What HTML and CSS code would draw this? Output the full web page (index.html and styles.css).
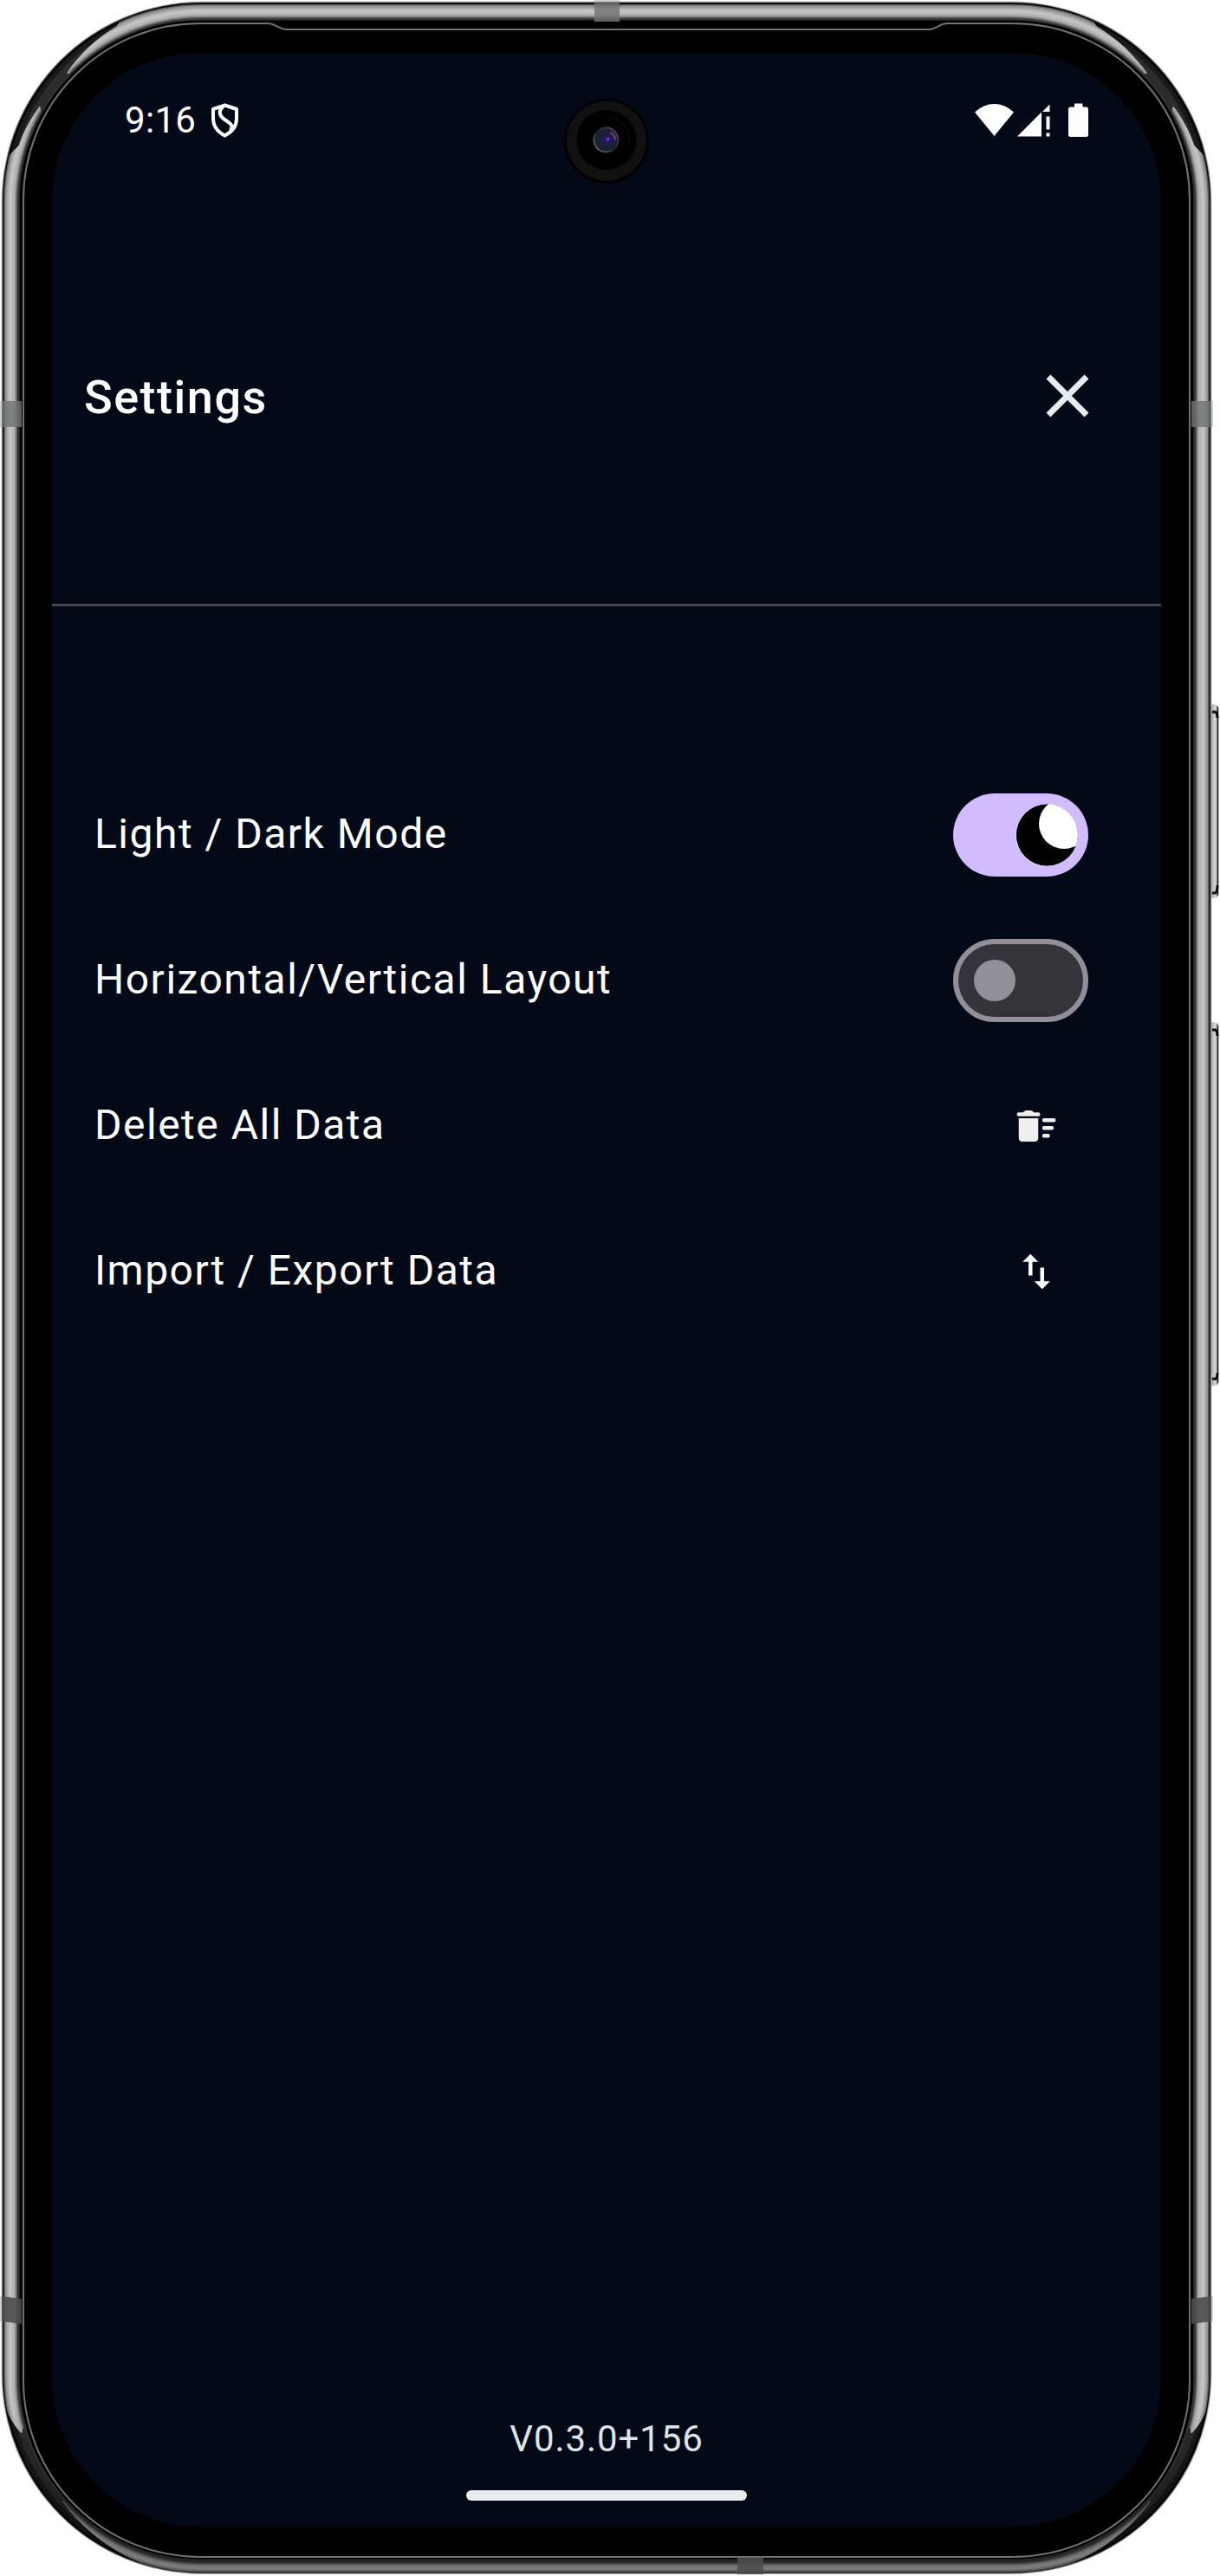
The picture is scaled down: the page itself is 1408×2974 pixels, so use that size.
FILE: index.html
```html
<!DOCTYPE html>
<html lang="en">
<head>
<meta charset="utf-8">
<title>Settings</title>
<link rel="stylesheet" href="styles.css">
</head>
<body>
<div class="phone">
  <svg class="phone-frame" viewBox="0 0 1408 2974" aria-hidden="true">
    <defs>
      <linearGradient id="button" x1="1397" x2="1407" y1="0" y2="0" gradientUnits="userSpaceOnUse">
        <stop offset="0" stop-color="#555"/><stop offset=".25" stop-color="#bbb"/><stop offset=".6" stop-color="#ddd"/><stop offset=".75" stop-color="#888"/><stop offset=".85" stop-color="#111"/><stop offset="1" stop-color="#bbb"/>
      </linearGradient>
      <linearGradient id="shade" x1="0" x2="0" y1="2780" y2="2900" gradientUnits="userSpaceOnUse">
        <stop offset="0" stop-color="#000" stop-opacity="0"/><stop offset="1" stop-color="#000" stop-opacity=".34"/>
      </linearGradient>
      <radialGradient id="lens" cx=".55" cy=".48" r=".5">
        <stop offset="0" stop-color="#4a28b0"/><stop offset=".25" stop-color="#28155a"/><stop offset=".6" stop-color="#1d1f38"/><stop offset="1" stop-color="#14242c"/>
      </radialGradient>
      <linearGradient id="lens-rim" x1="0" y1="1" x2="1" y2="0">
        <stop offset="0" stop-color="#777"/><stop offset=".5" stop-color="#222"/><stop offset="1" stop-color="#6b3f78"/>
      </linearGradient>
      <clipPath id="lit">
        <path d="M77 85C92 62 112 44 135 30L150 0H1250L1265 30C1288 44 1308 62 1324 85L1200 60H200Z"/>
        <path d="M46 123C36 136 28 150 22 168L0 190V2765C8 2785 15 2800 25 2809L40 2740L60 232Z"/>
        <path d="M1354 123C1364 136 1372 150 1378 168L1400 190V2765C1392 2785 1385 2800 1375 2809L1360 2740L1340 232Z"/>
        <path d="M72 2887C95 2920 130 2945 160 2958L165 2974H1235L1240 2958C1270 2945 1305 2920 1328 2887L1200 2920H200Z"/>
      </clipPath>
    </defs>

    <g class="side-button">
      <rect x="1394" y="813" width="12.5" height="224" rx="6"/>
      <rect x="1394" y="1180" width="12.5" height="420" rx="6"/>
      <path d="M1399 822H1403Q1405 824 1405 829M1399 1031H1403Q1405 1028 1405 1022M1399 1189H1403Q1405 1191 1405 1196M1399 1592H1403Q1405 1590 1405 1585"/>
    </g>

    <rect x="1.5" y="1.5" width="1397" height="2970.5" rx="231" fill="#bdbdbd"/>
    <rect x="2.5" y="2.5" width="1395" height="2968.5" rx="230" fill="#555"/>
    <rect x="3.2" y="3.2" width="1393.6" height="2967" rx="229" fill="#060606"/>
    <rect x="6" y="6" width="1388" height="2962" rx="226" fill="#1a1a1a"/>
    <rect x="11" y="11" width="1378" height="2952" rx="221" fill="#2c2c2c"/>
    <g clip-path="url(#lit)">
      <rect x="4.5" y="5" width="1391" height="2965" rx="227" fill="#626262"/>
      <rect x="6" y="6.5" width="1388" height="2962" rx="226" fill="#969696"/>
      <rect x="8" y="9" width="1384" height="2958" rx="224" fill="#aeaeae"/>
      <rect x="10" y="11" width="1380" height="2955" rx="222" fill="#c2c2c2"/>
      <rect x="14" y="15" width="1372" height="2950" rx="218" fill="#b4b4b4"/>
      <rect x="17" y="18" width="1366" height="2944" rx="215" fill="#8c8c8c"/>
      <rect x="19" y="20" width="1362" height="2940" rx="213" fill="#505050"/>
    </g>
    <rect x="20" y="21.5" width="1360" height="2936.5" rx="212" fill="#363636"/>
    <rect x="22.5" y="23.5" width="1355" height="2931" rx="208" fill="#000"/>
    <path class="shade" d="M3 2700H1397V2742A229 229 0 0 1 1168 2971H232A229 229 0 0 1 3 2742Z"/>
    <path class="seam" d="M231 27H309C317 27 322 33.5 331 34H1072C1081 33.5 1085 27 1093 27H1169A204 204 0 0 1 1373 231V2748A204 204 0 0 1 1169 2952H231A204 204 0 0 1 27 2748V231A204 204 0 0 1 231 27Z"/>

    <g class="antenna">
      <rect x="686" y="2" width="29" height="23"/>
      <rect x="2" y="463" width="23" height="30"/>
      <rect x="1375" y="463" width="23" height="30"/>
      <path class="antenna-edge" d="M686 0H715V2H686ZM0 463H2V493H0ZM1398 463H1400V493H1398ZM0 2651H2V2680H0ZM1398 2651H1400V2680H1398Z"/>
      <path class="antenna-dark" d="M2 2651L25 2654V2683L2 2680ZM1375 2654L1398 2651V2680L1375 2683ZM851 2953H881V2972H851Z"/>
    </g>
  </svg>

  <main class="screen">
    <div class="status-bar">
      <span class="clock">9:16</span>
      <svg class="shield" width="33" height="40" viewBox="0 0 33 40"><path d="M16.5 2.5L30 7V18C30 27 25.500 33 16.500 37.500C7.500 33 3 27 3 18V7ZM15 3.500C8.500 9 10 14.500 15.500 18.500C22 23 27 25 23 32"/></svg>
      <svg class="signals" width="132" height="40" viewBox="0 0 132 40">
        <path d="M1 10.500Q11 1 23.500 1T46 10.500L23.500 38Z"/>
        <path d="M87.500 1.500V10H79ZM50 38.500L78 10.500V38.500ZM83.500 15.500H87.500V30.500H83.500ZM83.500 34.500H87.500V38.500H83.500Z"/>
        <path d="M116 0.500H125.500V4.500H129.500Q132 4.500 132 7V36.500Q132 39 129.500 39H111.500Q109 39 109 36.500V7Q109 4.500 111.500 4.500H116Z"/>
      </svg>
      <svg class="camera" width="98" height="98" viewBox="0 0 98 98">
        <circle cx="49" cy="49" r="49" fill="#000"/>
        <circle cx="49" cy="48.500" r="46" fill="#111"/>
        <circle cx="49" cy="47.500" r="34.500" fill="#000"/>
        <path d="M52 21A27 27 0 0 1 75 53" fill="none" stroke="#0b0b0d" stroke-width="1.500"/>
        <circle cx="48.500" cy="47.500" r="14" fill="url(#lens)" stroke="url(#lens-rim)" stroke-width="2"/>
        <path d="M53 39Q59 41 59 48" fill="none" stroke="#8a4f96" stroke-width="2" opacity=".7"/>
        <circle cx="51" cy="46.500" r="1.300" fill="#7f50f0"/>
      </svg>
    </div>

    <header class="header">
      <h1 class="title">Settings</h1>
      <svg class="close" width="84" height="84" viewBox="0 0 24 24"><path d="M19 6.410L17.590 5 12 10.590 6.410 5 5 6.410 10.590 12 5 17.590 6.410 19 12 13.410 17.590 19 19 17.590 13.410 12z"/></svg>
    </header>

    <section class="options">
      <div class="option">
        <span class="label">Light / Dark Mode</span>
        <svg width="156" height="96" viewBox="0 0 156 96">
          <clipPath id="thumb"><circle cx="108" cy="48" r="36"/></clipPath>
          <rect width="156" height="96" rx="48" fill="#d0bcff"/>
          <g clip-path="url(#thumb)">
            <circle cx="108" cy="48" r="36" fill="#fff"/>
            <circle cx="108.500" cy="48" r="35.700" fill="#000"/>
            <circle cx="128" cy="35" r="29" fill="#fff"/>
          </g>
        </svg>
      </div>
      <div class="option">
        <span class="label">Horizontal/Vertical Layout</span>
        <svg width="156" height="96" viewBox="0 0 156 96">
          <rect x="3" y="3" width="150" height="90" rx="45" fill="#36343b" stroke="#938f99" stroke-width="6"/>
          <circle cx="48" cy="48" r="24" fill="#938f99"/>
        </svg>
      </div>
      <div class="option">
        <span class="label">Delete All Data</span>
        <svg class="action action-delete" width="54" height="54" viewBox="0 0 24 24"><path d="M3 8H13V18Q13 20 11 20H5Q3 20 3 18ZM3 5H5.200L6 4.300Q6.400 4 7 4H9Q9.600 4 10 4.300L10.800 5H13Q14 5 14 6T13 7H3Q2 7 2 6T3 5ZM16 8H21Q22 8 22 9T21 10H16Q15 10 15 9T16 8ZM16 12H20Q21 12 21 13T20 14H16Q15 14 15 13T16 12ZM16 16H18Q19 16 19 17T18 18H16Q15 18 15 17T16 16Z"/></svg>
      </div>
      <div class="option">
        <span class="label">Import / Export Data</span>
        <svg class="action" width="54" height="54" viewBox="0 0 24 24"><path d="M9 3L5 6.990h3V14h2V6.990h3L9 3zm7 14.010V10h-2v7.010h-3L15 21l4-3.990h-3z"/></svg>
      </div>
    </section>

    <footer class="footer">
      <span class="version">V0.3.0+156</span>
      <div class="home-bar"></div>
    </footer>
  </main>
</div>
</body>
</html>
```
FILE: styles.css
```css
* { box-sizing: border-box; }

body {
  margin: 0;
  background: #fff;
  font-family: Roboto, "Noto Sans", sans-serif;
}

svg { display: block; flex: none; }

/* The frame and the screen share one grid cell. */
.phone {
  display: grid;
  width: 1408px;
  height: 2974px;
  overflow: hidden;
}

.phone-frame {
  grid-area: 1 / 1;
  width: 1408px;
  height: 2974px;
}

.side-button rect { fill: url(#button); }
.side-button path { fill: none; stroke: #111; stroke-width: 3; }
.shade { fill: url(#shade); }
.seam { fill: #000; stroke: #717171; stroke-width: 2; }
.antenna { fill: #707570; fill-opacity: .82; }
.antenna-edge { fill: #c4c9c4; }
.antenna-dark { fill: #4c4e4c; fill-opacity: .9; }

.screen {
  grid-area: 1 / 1;
  position: relative;
  display: flex;
  flex-direction: column;
  width: 1280px;
  height: 2856px;
  margin: 61px 0 0 60px;
  border-radius: 171px;
  overflow: hidden;
  background: #030917;
  color: #fff;
}

.status-bar {
  display: flex;
  align-items: center;
  height: 156px;
  padding: 0 84px;
}

.clock { font-size: 42px; line-height: 48px; letter-spacing: 0.3px; }

.shield {
  margin-left: 17px;
  fill: none;
  stroke: #fff;
  stroke-width: 4;
  stroke-linejoin: round;
}

.signals { margin-left: auto; fill: #fff; }

.camera {
  position: absolute;
  top: 53px;
  left: 591px;
}

.header {
  display: flex;
  align-items: center;
  justify-content: space-between;
  height: 483px;
  padding: 0 66px 0 37px;
  border-bottom: 3px solid #49454f;
}

.title {
  margin: 0;
  padding-top: 3px;
  font-size: 54px;
  font-weight: 500;
  line-height: 64px;
  letter-spacing: 1.5px;
}

.close { fill: #e6ecef; }

.options { padding: 180px 84px 0 49px; }

.option {
  display: flex;
  align-items: center;
  justify-content: space-between;
  height: 168px;
}

.label {
  padding-bottom: 2px;
  font-size: 48px;
  line-height: 56px;
  letter-spacing: 1.5px;
}

.action { margin-right: 33px; fill: #fff; }
.action-delete { fill: #efefef; }

.footer {
  display: flex;
  flex-direction: column;
  align-items: center;
  gap: 34px;
  margin-top: auto;
  padding-bottom: 30px;
}

.version {
  color: #dde4ea;
  font-size: 42px;
  line-height: 50px;
  letter-spacing: 0.9px;
}

.home-bar {
  width: 324px;
  height: 12px;
  border-radius: 6px;
  background: #ebecee;
}
```
